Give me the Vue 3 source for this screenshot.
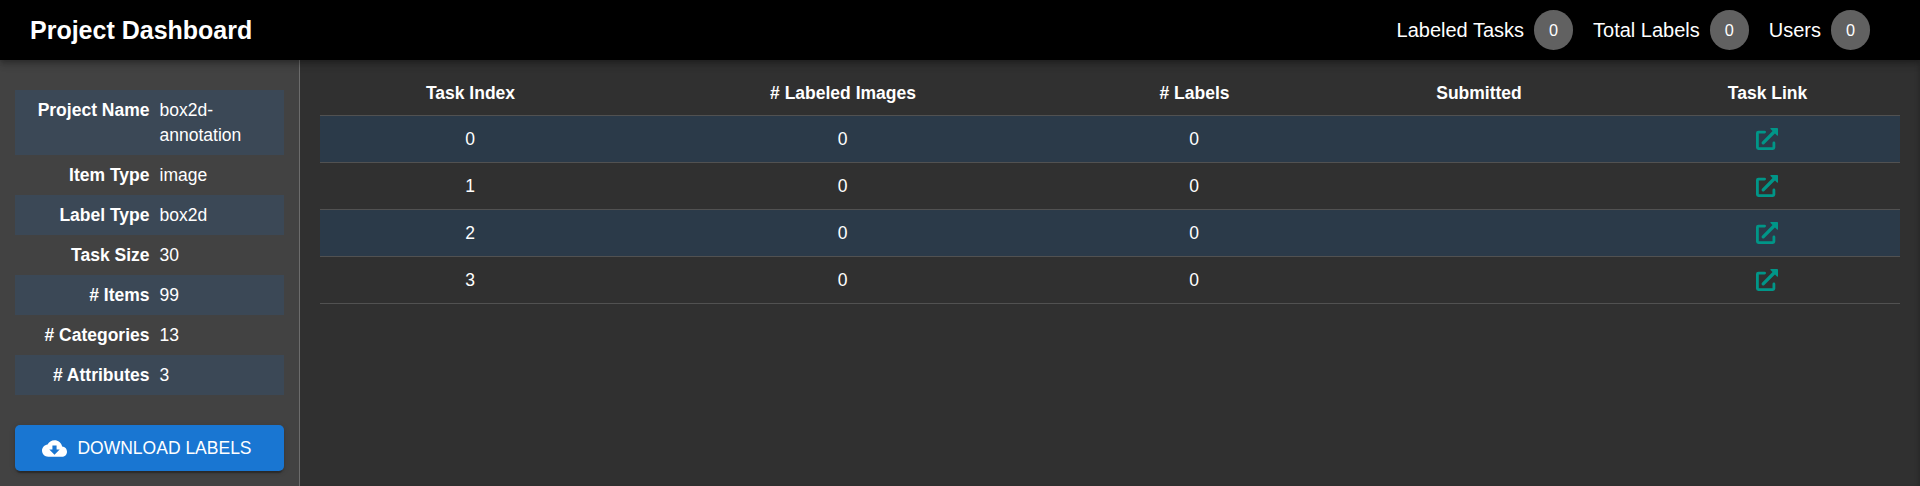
<script setup>
const stats = [
  { label: 'Labeled Tasks', value: 0 },
  { label: 'Total Labels', value: 0 },
  { label: 'Users', value: 0 },
]
const details = [
  ['Project Name', 'box2d-annotation'],
  ['Item Type', 'image'],
  ['Label Type', 'box2d'],
  ['Task Size', '30'],
  ['# Items', '99'],
  ['# Categories', '13'],
  ['# Attributes', '3'],
]
const tasks = [0, 1, 2, 3].map((index) => ({ index, images: 0, labels: 0 }))
</script>

<template>
  <div class="page">
    <header class="bar">
      <h1 class="title">Project Dashboard</h1>
      <div class="stats">
        <div v-for="s in stats" :key="s.label" class="stat">
          <span class="stat-label">{{ s.label }}</span>
          <span class="chip">{{ s.value }}</span>
        </div>
      </div>
    </header>
    <div class="body">
      <aside class="side">
        <dl class="details">
          <div v-for="d in details" :key="d[0]" class="detail">
            <dt>{{ d[0] }}</dt>
            <dd>{{ d[1] }}</dd>
          </div>
        </dl>
        <button class="download">
          <svg class="cloud" viewBox="0 0 24 24"><path d="M19.35 10.04C18.67 6.59 15.64 4 12 4 9.11 4 6.6 5.64 5.35 8.04 2.34 8.36 0 10.91 0 14c0 3.31 2.69 6 6 6h13c2.76 0 5-2.24 5-5 0-2.64-2.05-4.78-4.65-4.96zM17 13l-5 5-5-5h3V9h4v4h3z" /></svg>
          <span>DOWNLOAD LABELS</span>
        </button>
      </aside>
      <main class="main">
        <table class="tasks">
          <colgroup>
            <col class="c-index" /><col class="c-images" /><col class="c-labels" /><col class="c-submitted" /><col />
          </colgroup>
          <thead>
            <tr><th>Task Index</th><th># Labeled Images</th><th># Labels</th><th>Submitted</th><th>Task Link</th></tr>
          </thead>
          <tbody>
            <tr v-for="t in tasks" :key="t.index">
              <td>{{ t.index }}</td>
              <td>{{ t.images }}</td>
              <td>{{ t.labels }}</td>
              <td></td>
              <td>
                <a class="link">
                  <svg viewBox="0 0 22 22">
                    <path class="line" d="M8.6 4.1H2.4Q1.4 4.1 1.4 5.1v14.5q0 1 1 1h14.5q1 0 1-1v-4.7" />
                    <path class="shaft" d="M7.2 14.8L18 4" />
                    <path class="head" d="M14.8 0H21.3Q22 0 22 .7V7.2Q21.8 8 21 7.5L14.5 1Q14 .2 14.8 0z" />
                  </svg>
                </a>
              </td>
            </tr>
          </tbody>
        </table>
      </main>
    </div>
  </div>
</template>

<style>
body { margin: 0; overflow: hidden; background: #303030; }
</style>

<style scoped>
.page {
  display: flex;
  flex-direction: column;
  height: 486px;
  overflow: hidden;
  font-family: "Liberation Sans", Arial, sans-serif;
  font-size: 17.5px;
  line-height: 25px;
  color: #fff;
}
.bar {
  position: relative;
  z-index: 1;
  flex: none;
  display: flex;
  align-items: center;
  justify-content: space-between;
  box-sizing: border-box;
  height: 60px;
  padding: 0 50px 0 30px;
  background: #000;
  box-shadow: 0 2.5px 5px -1px rgba(0, 0, 0, 0.2), 0 5px 6px rgba(0, 0, 0, 0.14), 0 1px 12.5px rgba(0, 0, 0, 0.12);
}
.title { margin: 0; font-size: 25px; line-height: 40px; font-weight: 700; }
.stats { display: flex; gap: 20px; }
.stat { display: flex; align-items: center; gap: 10px; font-size: 20px; }
.chip {
  box-sizing: border-box;
  width: 39px;
  height: 40px;
  border-radius: 20px;
  background: #616161;
  font-size: 16.25px;
  line-height: 40px;
  text-align: center;
}
.body { flex: 1; display: flex; min-height: 0; }
.side {
  flex: none;
  box-sizing: border-box;
  width: 300px;
  padding: 30px 15px 0;
  border-right: 1px solid #6c6c6c;
  background: #424242;
}
.details { margin: 0 0 30px; }
.detail { display: flex; gap: 10px; padding: 7.5px 0; }
.detail:nth-child(odd) { background: #3b4856; }
.detail dt { width: 134.5px; text-align: right; font-weight: 700; }
.detail dd { width: 110px; margin: 0; }
.download {
  display: flex;
  align-items: center;
  justify-content: center;
  gap: 10px;
  box-sizing: border-box;
  width: 269px;
  height: 46px;
  padding: 0 5px 0 0;
  border: 0;
  border-radius: 5px;
  background: #1976d2;
  color: #fff;
  font: inherit;
  box-shadow: 0 4px 1px -2px rgba(0, 0, 0, 0.2), 0 2px 2px rgba(0, 0, 0, 0.14), 0 1px 6px rgba(0, 0, 0, 0.12);
}
.cloud { width: 25px; height: 25px; fill: #fff; }
.main {
  flex: 1;
  padding: 10px 20px 0;
  background: #303030;
  box-shadow: inset -4px 0 4px -2px rgba(0, 0, 0, 0.16);
}
.tasks { width: 1580px; table-layout: fixed; border-collapse: separate; border-spacing: 0; }
.c-index { width: 300px; }
.c-images { width: 445px; }
.c-labels { width: 258px; }
.c-submitted { width: 311px; }
th, td { box-sizing: border-box; height: 47px; padding: 0; border-bottom: 1px solid #515151; text-align: center; vertical-align: middle; }
th { height: 46px; padding: 2px 0 0 1px; font-weight: 700; }
tbody tr:nth-child(odd) { background: #2b3a49; }
.link { display: flex; justify-content: center; }
.link svg { width: 22px; height: 22px; }
.line { fill: none; stroke: #009688; stroke-width: 2.8; stroke-linecap: round; }
.shaft { fill: none; stroke: #009688; stroke-width: 3.3; stroke-linecap: round; }
.head { fill: #009688; }
</style>
